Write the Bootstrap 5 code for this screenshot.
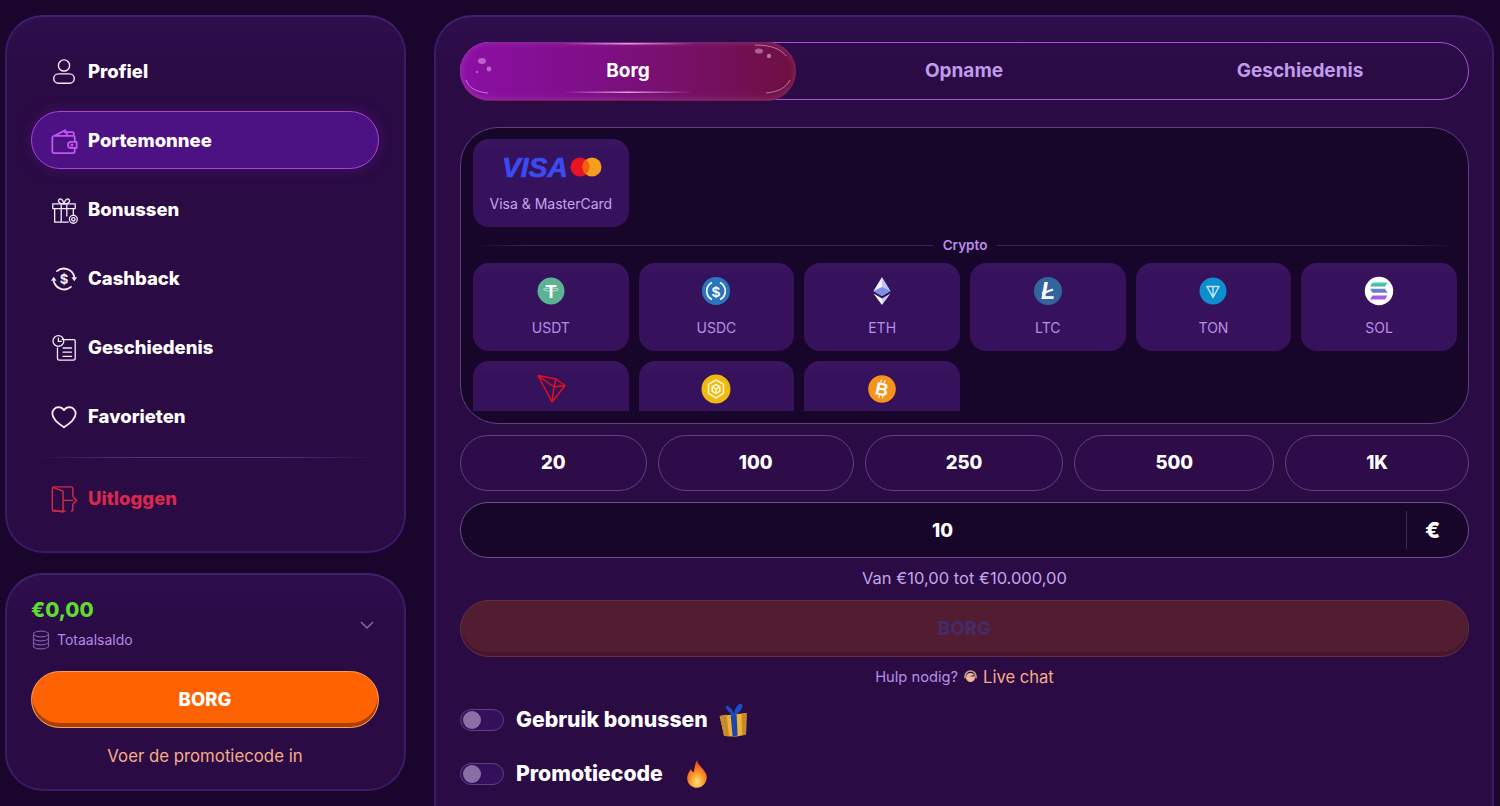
<!DOCTYPE html>
<html lang="nl">
<head>
    <meta charset="UTF-8">
    <meta name="viewport" content="width=device-width, initial-scale=1.0">
    <title>Portemonnee</title>
    <link rel="stylesheet" href="https://cdn.jsdelivr.net/npm/bootstrap@5.3.0/dist/css/bootstrap.min.css">
    <style>
        html, body { height: 100%; overflow: hidden; }
        body {
            background: #1a062c;
            color: #fff;
            font-family: "Inter", "Liberation Sans", sans-serif;
        }
        .page-wrap { height: 806px; overflow: hidden; padding: 15px 6px 0 5px; gap: 28px; }
        .side-col { width: 401px; flex: none; gap: 20px; }
        .panel-box {
            background: linear-gradient(180deg, #2e0e4c 0, #2a0b44 60px);
            border: 2px solid #3b1a68;
            border-top-color: #40216e;
            border-radius: 38px;
        }
        .menu-panel { height: 538px; padding: 25px 25px 0 24px; }
        .menu-link {
            height: 58px;
            margin-bottom: 11px;
            padding: 1px 0 0 18px;
            gap: 10px;
            border: 1px solid transparent;
            border-radius: 29px;
            font-size: 18.5px;
            font-weight: 800;
            color: #fff;
        }
        .menu-link:hover { color: #fff; }
        .menu-link.is-current {
            background: #4c1283;
            border-color: #a944cf;
            box-shadow: 0 0 14px rgba(110, 30, 170, .35);
        }
        .menu-link svg { width: 28px; height: 28px; flex: none; }
        .menu-sep {
            height: 1px; margin: 1px 0 11px; opacity: 1; border: 0;
            background: linear-gradient(90deg, transparent, #54357e 30%, #54357e 70%, transparent);
        }
        .menu-link.is-exit { color: #d8284e; }
        .money-panel { height: 218px; padding: 23px 25px 0 24px; }
        .money-top { height: 62px; }
        .money-sum { font-size: 20.5px; font-weight: 800; line-height: 24px; color: #5fdc2f; }
        .money-note { font-size: 14px; color: #b48ae8; margin-top: 7px; gap: 6px; line-height: 22px; }
        .money-chevron { margin-top: 22px; }
        .orange-btn {
            display: block; width: 100%; height: 57px; margin-top: 11px;
            background: #ff6200; color: #fff;
            border: 1px solid #f7a05c; border-radius: 29px;
            box-shadow: inset 0 -4px 0 #a83f05;
            font-size: 18.5px; font-weight: 800;
        }
        .orange-btn:hover { background: #ff6200; color: #fff; }
        .promo-link { color: #f7ac8b; font-size: 16.8px; line-height: 20px; margin-top: 18px; text-decoration: none; }
        .main-box {
            flex: 1; height: 860px; padding: 25px 23px 25px 24px;
            border-radius: 38px;
        }
        .tab-row { height: 58px; border: 1px solid #b04fd8; border-radius: 29px; }
        .tab-row .nav-link {
            height: 56px; border: 0; border-radius: 29px; background: transparent;
            color: #c09bec; font-size: 19px; font-weight: 700;
            padding: 0; position: relative;
        }
        .tab-row .nav-link.tab-on {
            height: 58px; margin: -1px 0 -1px -1px; color: #fff;
            background: linear-gradient(90deg, #8c0fa5 0, #7e0f85 42%, #6e1040 100%);
            box-shadow: inset 0 0 7px rgba(255, 190, 255, .22), 0 1px 0 #7c1b4e;
        }
        .tab-gloss { position: absolute; inset: 0; width: 100%; height: 100%; pointer-events: none; }
        .pay-box {
            height: 297px; margin-top: 27px; padding: 11px 11px 12px 12px;
            background: #18052a; border: 1px solid #5b4280; border-radius: 38px;
        }
        .pay-scroll { height: 272px; overflow: hidden; }
        .pay-grid { --bs-gutter-x: 10px; --bs-gutter-y: 10px; }
        .pay-card {
            height: 88px; padding-top: 13px;
            background: linear-gradient(180deg, #3a1660 0, #36115c 14px);
            border-radius: 16px;
            color: #b78fe8; font-size: 14px; line-height: 18px; text-align: center;
        }
        .pay-card svg { display: block; width: 30px; height: 30px; margin: 0 auto 13px; }
        .pay-card.is-card svg { width: 102px; height: 30px; margin-bottom: 13px; }
        .pay-card.is-card { color: #c4a6ec; }
        .visa-word { font-family: "Liberation Sans", sans-serif; font-weight: 700; font-style: italic; font-size: 27px; }
        .coin-word { font-family: "Liberation Sans", sans-serif; font-weight: 700; }
        .crypto-line { height: 18px; margin: 9px 0; gap: 10px; color: #b98fe9; font-size: 13.5px; font-weight: 600; }
        .crypto-line i { flex: 1; height: 1px; background: linear-gradient(90deg, transparent, #3b2358 12%, #3b2358 100%); }
        .crypto-line i:last-child { transform: scaleX(-1); }
        .sum-row { gap: 11px; margin-top: 11px; }
        .sum-btn {
            height: 56px; border: 1px solid #5e4383; border-radius: 28px; color: #fff;
            background: #2d0c49; font-size: 18.5px; font-weight: 800;
        }
        .sum-btn:hover { color: #fff; background: #2d0c49; border-color: #5e4383; }
        .amount-row {
            height: 56px; margin-top: 11px; background: #18052a;
            border: 1px solid #695089; border-radius: 28px;
        }
        .amount-input {
            flex: 1; height: 100%; min-width: 0; padding: 0 0 0 18px;
            background: transparent; border: 0; border-radius: 28px 0 0 28px; text-align: center;
            color: #fff; font-size: 18.5px; font-weight: 800;
        }
        .amount-input:focus { background: transparent; color: #fff; box-shadow: none; }
        .euro-cell { width: 62px; height: 38px; padding-right: 10px; border-left: 1px solid #3d2a57; font-size: 22px; font-weight: 800; }
        .range-note { margin-top: 10px; line-height: 20px; font-size: 16.5px; color: #c4a6ec; text-align: center; }
        .dim-btn {
            display: block; width: 100%; height: 57px; margin-top: 12px;
            background: #521c31; color: #452a69; border: 1px solid #633046; border-radius: 29px;
            box-shadow: inset 0 -4px 0 #471729; font-size: 18.5px; font-weight: 800; opacity: 1;
        }
        .dim-btn:disabled { background: #521c31; color: #452a69; border-color: #633046; opacity: 1; }
        .help-note { margin-top: 10px; gap: 5px; line-height: 20px; font-size: 14.7px; color: #b78fe8; }
        .help-note a { color: #f7ac8b; font-size: 16.6px; text-decoration: none; }
        .switch-row { height: 22px; min-height: 22px; margin: 22px 0 0; }
        .switch-row + .switch-row { margin-top: 32px; }
        .switch-row .form-check-input {
            width: 44px; height: 22px; margin: 0; float: none; flex: none;
            background-color: #35105a; border: 1px solid #5b3f82;
            --bs-form-switch-bg: none;
            position: relative;
        }
        .switch-row .form-check-input::after {
            content: ""; position: absolute; left: 2px; top: 1px; width: 18px; height: 18px;
            border-radius: 50%; background: #8a6ea6;
        }
        .switch-row .form-check-label { margin-left: 12px; font-size: 21.2px; font-weight: 800; white-space: nowrap; }
        .gift-mark { flex: none; margin-left: 10px; }
        .flame-mark { flex: none; margin-left: 22px; }
    </style>
</head>
<body>
    <div class="page-wrap d-flex">
        <div class="side-col d-flex flex-column">
            <div class="panel-box menu-panel">
                <nav class="nav flex-column">
                    <a class="nav-link menu-link d-flex align-items-center" href="#">
                        <svg viewBox="0 0 30 30" fill="none" stroke="#f4ecfb" stroke-width="1.500"><circle cx="15" cy="8" r="6"/><rect x="4" y="17" width="22" height="10" rx="5"/></svg>
                        Profiel
                    </a>
                    <a class="nav-link menu-link is-current d-flex align-items-center" href="#">
                        <svg viewBox="0 0 30 30" fill="none" stroke="#c655ef" stroke-width="1.900" stroke-linejoin="round"><path d="M5 9.500h20a1.500 1.500 0 0 1 1.500 1.500v5M26.500 22.500V26a2 2 0 0 1-2 2H4.500a2 2 0 0 1-2-2V11.500a2 2 0 0 1 2-2"/><path d="M5 9.500 16 3.500l3 6M15 5.500h9a1.500 1.500 0 0 1 1.500 1.500v2.500"/><path d="M28.500 16h-6a3.200 3.200 0 0 0 0 6.500h6Z"/><circle cx="23.500" cy="19.200" r=".7"/></svg>
                        Portemonnee
                    </a>
                    <a class="nav-link menu-link d-flex align-items-center" href="#">
                        <svg viewBox="0 0 30 30" fill="none" stroke="#f4ecfb" stroke-width="1.400" stroke-linejoin="round"><path d="M3 8.500h24v5H3ZM5 13.500V28h15M25 13.500v7M12 8.500V28M18 8.500V22"/><path d="M15 8.500C10 8.500 8 6 9.500 4S14 3.500 15 8.500C16 3.500 19 2 20.500 4S20 8.500 15 8.500Z"/><circle cx="25" cy="25" r="4.200"/><circle cx="25" cy="25" r="1.800"/></svg>
                        Bonussen
                    </a>
                    <a class="nav-link menu-link d-flex align-items-center" href="#">
                        <svg viewBox="0 0 30 30" fill="none" stroke="#f4ecfb" stroke-width="1.900" stroke-linecap="round"><path d="M7.500 6.500A11.500 11.500 0 0 1 26 12.500M22.500 23.500A11.500 11.500 0 0 1 4 17.500"/><path d="M23 13 26 17.500 29 13ZM1 17 4 12.500 7 17Z" fill="#f4ecfb" stroke="none"/><text x="15" y="20" text-anchor="middle" font-size="14" font-weight="700" fill="#f4ecfb" stroke="none">$</text></svg>
                        Cashback
                    </a>
                    <a class="nav-link menu-link d-flex align-items-center" href="#">
                        <svg viewBox="0 0 30 30" fill="none" stroke="#f4ecfb" stroke-width="1.400" stroke-linecap="round"><path d="M13 6h12.500a1.500 1.500 0 0 1 1.500 1.500V26a2 2 0 0 1-2 2H10a2 2 0 0 1-2-2V15"/><circle cx="9" cy="7.500" r="5.800"/><path d="M9 4.500v3.300h3M14 15h9M14 19.500h9M14 24h9"/></svg>
                        Geschiedenis
                    </a>
                    <a class="nav-link menu-link d-flex align-items-center" href="#">
                        <svg viewBox="0 0 30 30" fill="none" stroke="#f6eefc" stroke-width="1.900" stroke-linejoin="round"><path d="M15 26C7 21 2.500 16.500 2.500 11A6.800 6.800 0 0 1 9 4.500c2.700 0 4.800 1.200 6 3.200 1.200-2 3.300-3.200 6-3.200A6.800 6.800 0 0 1 27.500 11C27.500 16.500 23 21 15 26Z"/></svg>
                        Favorieten
                    </a>
                    <hr class="menu-sep">
                    <a class="nav-link menu-link is-exit d-flex align-items-center" href="#">
                        <svg viewBox="0 0 30 30" fill="none" stroke="#d8284e" stroke-width="1.500" stroke-linejoin="round"><path d="M17 28H4.500A2 2 0 0 1 2.500 26V4a2 2 0 0 1 2-2h18a2 2 0 0 1 2 2v9M24.500 20v6a2 2 0 0 1-2 2"/><path d="M2.800 2.500 14 6.500v22.500L3.500 27"/><path d="M14 16.500h11M25 13l3.500 3.500L25 20"/></svg>
                        Uitloggen
                    </a>
                </nav>
            </div>
            <div class="panel-box money-panel">
                <div class="money-top d-flex align-items-start justify-content-between">
                    <div>
                        <div class="money-sum">€0,00</div>
                        <div class="money-note d-flex align-items-center">
                            <svg width="20" height="20" viewBox="0 0 20 20" fill="none" stroke="#7b5aa6" stroke-width="1.200"><ellipse cx="10" cy="4" rx="7.500" ry="2.800"/><path d="M2.500 4v12c0 1.600 3.400 2.800 7.500 2.800s7.500-1.200 7.500-2.800V4M2.500 8c0 1.600 3.400 2.800 7.500 2.800S17.500 9.600 17.500 8M2.500 12c0 1.600 3.400 2.800 7.500 2.800s7.500-1.200 7.500-2.800"/></svg>
                            Totaalsaldo
                        </div>
                    </div>
                    <svg class="money-chevron me-1" width="16" height="10" viewBox="0 0 16 10" fill="none" stroke="#8669ac" stroke-width="1.500"><path d="M2 2l6 6 6-6"/></svg>
                </div>
                <button type="button" class="btn orange-btn">BORG</button>
                <a class="promo-link d-block text-center" href="#">Voer de promotiecode in</a>
            </div>
        </div>

        <div class="panel-box main-box">
            <div class="nav nav-justified tab-row">
                <button type="button" class="nav-link tab-on">
                    Borg
                    <svg class="tab-gloss" viewBox="0 0 336 58" preserveAspectRatio="none" fill="none">
                        <defs>
                            <linearGradient id="glossFade" x1="0" y1="0" x2="1" y2="0"><stop offset="0" stop-color="#f3c6f6" stop-opacity="0"/><stop offset=".5" stop-color="#f3c6f6" stop-opacity=".8"/><stop offset="1" stop-color="#f3c6f6" stop-opacity="0"/></linearGradient>
                        </defs>
                        <path d="M6 38c3 8 10 12 22 13M306 51c12-1 20-5 24-13M295 3c16 0 26 4 31 11" stroke="#f0c4f5" stroke-opacity=".55" stroke-width="1"/>
                        <rect x="103" y="49.500" width="130" height="1.500" fill="url(#glossFade)"/>
                        <rect x="103" y="1" width="130" height="1.500" fill="url(#glossFade)"/>
                        <ellipse cx="22" cy="19" rx="4" ry="3" fill="#e6b3ee" fill-opacity=".5"/>
                        <circle cx="29" cy="27" r="2.400" fill="#e6b3ee" fill-opacity=".55"/>
                        <circle cx="17" cy="30" r="1.200" fill="#e6b3ee" fill-opacity=".5"/>
                        <ellipse cx="299" cy="9" rx="4" ry="2.600" fill="#e8b4d8" fill-opacity=".5"/>
                        <circle cx="309" cy="14" r="2.200" fill="#e8b4d8" fill-opacity=".6"/>
                    </svg>
                </button>
                <button type="button" class="nav-link">Opname</button>
                <button type="button" class="nav-link">Geschiedenis</button>
            </div>

            <div class="pay-box">
                <div class="pay-scroll">
                    <div class="row row-cols-6 pay-grid">
                        <div class="col">
                            <div class="pay-card is-card">
                                <svg viewBox="0 0 102 30">
                                    <text class="visa-word" x="2" y="25" fill="#3a4cf0" stroke="#3a4cf0" stroke-width=".6" textLength="66" lengthAdjust="spacingAndGlyphs">VISA</text>
                                    <circle cx="80" cy="15" r="9.500" fill="#e8141f"/>
                                    <circle cx="92" cy="15" r="9.500" fill="#f59e1c"/>
                                    <path d="M86 7.600a9.500 9.500 0 0 1 0 14.800 9.500 9.500 0 0 1 0-14.800Z" fill="#f2600f"/>
                                </svg>
                                Visa &amp; MasterCard
                            </div>
                        </div>
                    </div>
                    <div class="crypto-line d-flex align-items-center"><i></i><span>Crypto</span><i></i></div>
                    <div class="row row-cols-6 pay-grid">
                        <div class="col"><div class="pay-card">
                            <svg viewBox="0 0 30 30"><circle cx="15" cy="15" r="13.500" fill="#5bb394"/><text class="coin-word" x="15" y="22" text-anchor="middle" font-size="18" fill="#fff">T</text><ellipse cx="15" cy="13.500" rx="7.500" ry="1.500" fill="none" stroke="#fff" stroke-opacity=".7" stroke-width=".8"/></svg>
                            USDT
                        </div></div>
                        <div class="col"><div class="pay-card">
                            <svg viewBox="0 0 30 30"><circle cx="15" cy="15" r="14" fill="#2a74c2"/><path d="M11 6.500a9.500 9.500 0 0 0 0 17M19 6.500a9.500 9.500 0 0 1 0 17" fill="none" stroke="#fff" stroke-width="1.700"/><text class="coin-word" x="15" y="20.500" text-anchor="middle" font-size="15" fill="#fff">$</text></svg>
                            USDC
                        </div></div>
                        <div class="col"><div class="pay-card">
                            <svg viewBox="0 0 30 30"><path d="M15 1 6.500 15 15 20Z" fill="#f1f0fb"/><path d="M15 1l8.500 14L15 20Z" fill="#bcc6f3"/><path d="M6.500 15 15 11l8.500 4L15 20Z" fill="#7f8fe6"/><path d="M6.500 17.500 15 29v-6.500Z" fill="#fff"/><path d="M23.500 17.500 15 29v-6.500Z" fill="#c6cff5"/></svg>
                            ETH
                        </div></div>
                        <div class="col"><div class="pay-card">
                            <svg viewBox="0 0 30 30"><circle cx="15" cy="15" r="14" fill="#33649c"/><text class="coin-word" x="15" y="23" text-anchor="middle" font-size="23" font-style="italic" fill="#fff">L</text><path d="M9 17.500l11-4" stroke="#fff" stroke-width="2.200"/></svg>
                            LTC
                        </div></div>
                        <div class="col"><div class="pay-card">
                            <svg viewBox="0 0 30 30"><circle cx="15" cy="15" r="13.500" fill="#0d8fcf"/><path d="M9 10.500h12L15 21.500ZM15 10.500v11" fill="none" stroke="#bfe9fb" stroke-width="1.500" stroke-linejoin="round"/></svg>
                            TON
                        </div></div>
                        <div class="col"><div class="pay-card">
                            <svg viewBox="0 0 30 30"><defs><linearGradient id="solGrad" x1="0" y1="0" x2="0" y2="1"><stop offset="0" stop-color="#3fd6b0"/><stop offset=".5" stop-color="#6a7bc8"/><stop offset="1" stop-color="#b752ec"/></linearGradient></defs><circle cx="15" cy="15" r="14.200" fill="#fff"/><path d="M8.500 6.500h15l-2.500 4H6ZM6 12.800h15l2.500 4h-15ZM8.500 19.500h15l-2.500 4H6Z" fill="url(#solGrad)"/></svg>
                            SOL
                        </div></div>
                        <div class="col"><div class="pay-card">
                            <svg viewBox="0 0 30 30" fill="none" stroke="#e3101f" stroke-width="1.500" stroke-linejoin="round"><path d="M2 1.500 16 28 29 11.500 20 5ZM2 1.500 18 13 16 28M18 13 29 11.500M18 13 20 5"/></svg>
                        </div></div>
                        <div class="col"><div class="pay-card">
                            <svg viewBox="0 0 30 30"><circle cx="15" cy="15" r="14.500" fill="#efb90f"/><g fill="none" stroke="#fff4c8" stroke-width="1.600" stroke-linejoin="round"><path d="M15 6l7.500 4.300v9L15 24l-7.500-4.700v-9Z"/><path d="M15 10.500l3.800 2.200v4.600L15 19.500l-3.800-2.200v-4.600ZM15 15v4.500M11.200 12.700 15 15l3.800-2.300"/></g></svg>
                        </div></div>
                        <div class="col"><div class="pay-card">
                            <svg viewBox="0 0 30 30"><circle cx="15" cy="15" r="13.800" fill="#f7931a"/><text class="coin-word" x="15" y="21.500" text-anchor="middle" font-size="18" fill="#fff" transform="rotate(12 15 15)">B</text><path d="M14.500 5.500l-.5 3M18 6l-.6 3M12.500 21l-.6 3M16 21.500l-.6 3" stroke="#fff" stroke-width="1.200"/></svg>
                        </div></div>
                    </div>
                </div>
            </div>

            <div class="sum-row d-flex">
                <button type="button" class="btn sum-btn flex-fill">20</button>
                <button type="button" class="btn sum-btn flex-fill">100</button>
                <button type="button" class="btn sum-btn flex-fill">250</button>
                <button type="button" class="btn sum-btn flex-fill">500</button>
                <button type="button" class="btn sum-btn flex-fill">1K</button>
            </div>

            <div class="amount-row d-flex align-items-center">
                <input class="form-control amount-input" type="text" value="10">
                <div class="euro-cell d-flex align-items-center justify-content-center">€</div>
            </div>
            <div class="range-note">Van €10,00 tot €10.000,00</div>
            <button type="button" class="btn dim-btn" disabled>BORG</button>
            <div class="help-note d-flex align-items-center justify-content-center">
                Hulp nodig?
                <svg width="15" height="15" viewBox="0 0 15 15"><circle cx="7.500" cy="7.500" r="4.500" fill="#f0b79c"/><path d="M2 8.500V6.500a5.500 5.500 0 0 1 11 0v2" fill="none" stroke="#c9a08e" stroke-width="1.500"/><path d="M3.500 6.500C6 7 9 6 10 4.500c1 1 1.500 1.500 1.500 2" fill="#6b3b32"/></svg>
                <a href="#">Live chat</a>
            </div>

            <div class="form-check form-switch switch-row d-flex align-items-center p-0">
                <input class="form-check-input" type="checkbox" id="useBonus">
                <label class="form-check-label" for="useBonus">Gebruik bonussen</label>
                <svg class="gift-mark" width="32" height="34" viewBox="0 0 32 34">
                    <g transform="rotate(-4 16 17)">
                        <path d="M2 12l27-1-2 21c-7 2-14 2-22 0Z" fill="#efb238"/>
                        <path d="M2 12l7-1 1 22-5-1ZM24 11l5 0-2 21-4 1Z" fill="#c58a2c"/>
                        <path d="M13 12h6l-.5 21h-5Z" fill="#1f44b0"/>
                        <path d="M15.500 12C12 10 8 5 9 2.500c2.500-1 6 4 7.500 8C18 5 21 .5 25 1.500c2 3-3 9-8 11Z" fill="#1d4dc6"/>
                    </g>
                </svg>
            </div>
            <div class="form-check form-switch switch-row d-flex align-items-center p-0">
                <input class="form-check-input" type="checkbox" id="usePromo">
                <label class="form-check-label" for="usePromo">Promotiecode</label>
                <svg class="flame-mark" width="24" height="32" viewBox="0 0 26 32">
                    <defs><radialGradient id="flameFill" cx=".5" cy=".8" r=".75"><stop offset="0" stop-color="#ffe27a"/><stop offset=".45" stop-color="#f99a2a"/><stop offset="1" stop-color="#e8401e"/></radialGradient></defs>
                    <path d="M13 1c1 6 9 10 10.500 17 1 7-4.500 13-10.500 13S1.500 26 2.500 19C3 15 5 13 6.500 10.500c.7 2 1.500 3 3 3.500C10.500 10 10.500 5 13 1Z" fill="url(#flameFill)"/>
                </svg>
            </div>
        </div>
    </div>
</body>
</html>
